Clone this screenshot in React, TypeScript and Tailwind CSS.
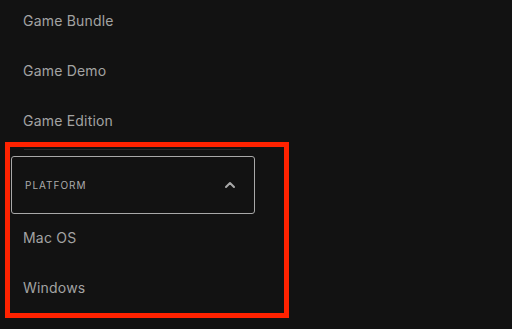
import { ChevronUp } from "lucide-react";

const typeItems = ["Game Bundle", "Game Demo", "Game Edition"];
const platformItems = ["Mac OS", "Windows"];

function FilterItem({ label }: { label: string }) {
  return (
    <div className="h-[50px] flex items-center pl-[23px] text-[14px] leading-5 text-[#a3a3a3] tracking-[0.2px]">
      {label}
    </div>
  );
}

export default function App() {
  return (
    <div
      className="relative w-[512px] h-[329px] overflow-hidden bg-[#121212]"
      style={{ fontFamily: "Inter, 'Liberation Sans', sans-serif" }}
    >
      <div className="w-[266px] -mt-[4px]">
        {typeItems.map((item) => (
          <FilterItem key={item} label={item} />
        ))}

        <div className="mt-[3px] ml-[24px] mr-[25px] h-px bg-[#2a2a2a]" />

        <div className="ml-[11px] mr-[11px] mt-[6px] h-[58px] flex items-center justify-between border border-[#a8a8a8] rounded-[3px] pl-[13px] pr-[16px]">
          <span className="text-[10px] tracking-[1px] text-[#ababab] uppercase">
            Platform
          </span>
          <ChevronUp className="w-[16px] h-[16px] text-[#a8a8a8]" strokeWidth={3} />
        </div>

        <div className="mt-[-1px]">
          {platformItems.map((item) => (
            <FilterItem key={item} label={item} />
          ))}
        </div>
      </div>

      {/* highlight annotation */}
      <div className="absolute left-[5px] top-[142px] w-[284px] h-[176px] border-[5px] border-[#ff2200] pointer-events-none" />
    </div>
  );
}
